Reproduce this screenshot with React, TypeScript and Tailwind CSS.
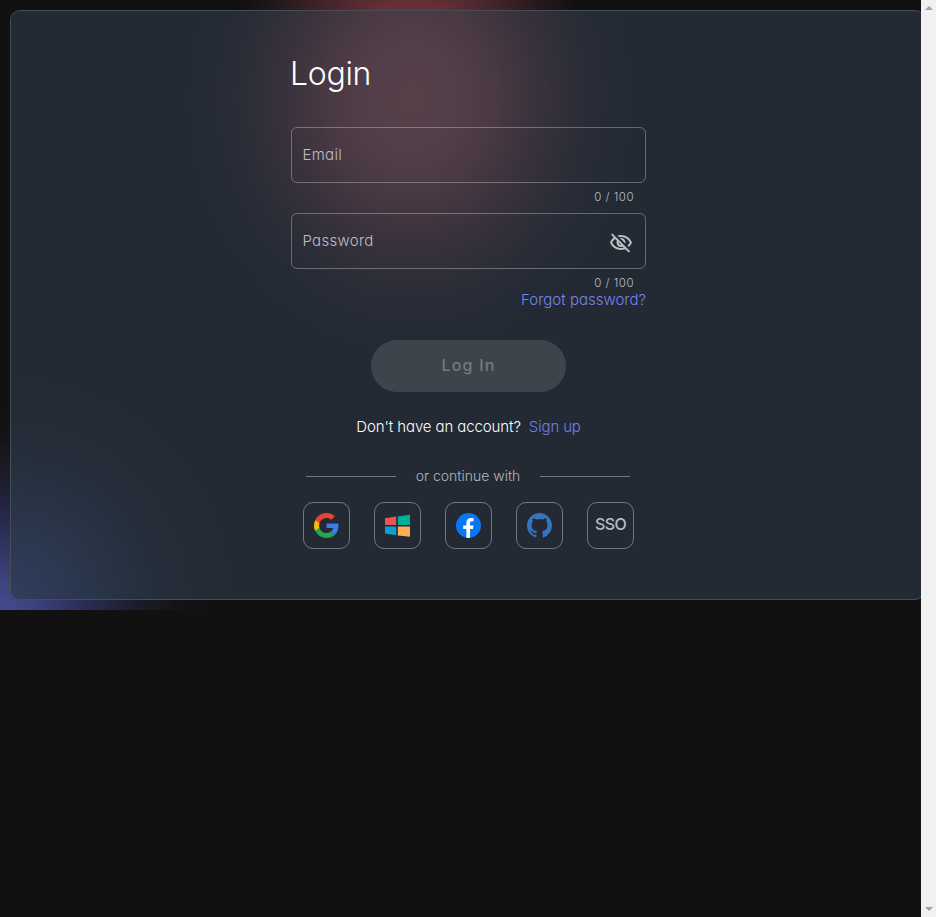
import React from "react";

function Field({ label, children }: { label: string; children?: React.ReactNode }) {
  return (
    <div className="h-[86px]">
      <div className="flex h-14 items-center justify-between rounded-[6px] border border-white/30 pr-3 pl-[10.5px]">
        <span className="text-[15px] leading-5 font-[350] tracking-[0.28px] text-[#bebfc4]">{label}</span>
        {children}
      </div>
      <div className="pt-[6px] pr-3 text-right text-[11.5px] leading-4 font-[350] tracking-[0.5px] text-[#bbbec3]">0 / 100</div>
    </div>
  );
}

function EyeOff() {
  return (
    <svg viewBox="0 0 24 24" className="mt-[3px] h-6 w-6" fill="#bcc0c5">
      <path d="M12 6c3.79 0 7.17 2.13 8.82 5.5-.59 1.22-1.42 2.27-2.41 3.12l1.41 1.41c1.39-1.23 2.49-2.77 3.18-4.53C21.27 7.11 17 4 12 4c-1.27 0-2.49.2-3.64.57l1.65 1.65C10.66 6.09 11.32 6 12 6zm-1.07 1.14L13 9.21c.57.25 1.03.71 1.28 1.28l2.07 2.07c.08-.34.14-.7.14-1.07C16.5 9.01 14.48 7 12 7c-.37 0-.72.05-1.07.14zM2.01 3.87l2.68 2.68C3.06 7.83 1.77 9.53 1 11.5 2.73 15.89 7 19 12 19c1.52 0 2.98-.29 4.32-.82l3.42 3.42 1.41-1.41L3.42 2.45 2.01 3.87zm7.5 7.5l2.61 2.61c-.04.01-.08.02-.12.02-1.38 0-2.5-1.12-2.5-2.5 0-.05.01-.08.01-.13zm-3.4-3.4l1.75 1.75c-.23.55-.36 1.15-.36 1.78 0 2.48 2.02 4.5 4.5 4.5.63 0 1.23-.13 1.77-.36l.98.98c-.88.24-1.8.38-2.75.38-3.79 0-7.17-2.13-8.82-5.5.7-1.43 1.72-2.61 2.93-3.53z" />
    </svg>
  );
}

function Google() {
  return (
    <svg viewBox="0 0 48 48" className="h-[25px] w-[25px]">
      <path fill="#EA4335" d="M24 9.5c3.54 0 6.71 1.22 9.21 3.6l6.85-6.85C35.9 2.38 30.47 0 24 0 14.62 0 6.51 5.38 2.56 13.22l7.98 6.19C12.43 13.72 17.74 9.5 24 9.5z" />
      <path fill="#3b7bea" d="M46.98 24.55c0-1.57-.15-3.09-.38-4.55H24v9.02h12.94c-.58 2.96-2.26 5.48-4.78 7.18l7.73 6c4.51-4.18 7.09-10.36 7.09-17.65z" />
      <path fill="#FBBC05" d="M10.53 28.59c-.48-1.45-.76-2.99-.76-4.59s.27-3.14.76-4.59l-7.98-6.19C.92 16.46 0 20.12 0 24c0 3.88.92 7.54 2.56 10.78l7.97-6.19z" />
      <path fill="#22a652" d="M24 48c6.48 0 11.93-2.13 15.89-5.81l-7.73-6c-2.15 1.45-4.92 2.3-8.16 2.3-6.26 0-11.57-4.22-13.47-9.91l-7.98 6.19C6.51 42.62 14.62 48 24 48z" />
    </svg>
  );
}

function Windows() {
  return (
    <svg viewBox="0 0 25 24" className="h-6 w-[25px]">
      <path fill="#e9554f" d="M0 4.2 11.2 2.6V11H0z" />
      <path fill="#00b09c" d="M12.8 2.4 25 .8V11H12.8z" />
      <path fill="#0aa0d0" d="M0 12.6h11.2v8.6L0 19.6z" />
      <path fill="#f9ad55" d="M12.8 12.6H25v10.2l-12.2-1.4z" />
    </svg>
  );
}

function Facebook() {
  return (
    <svg viewBox="0 0 26 26" className="h-[25px] w-[25px]">
      <circle cx="13" cy="13" r="13" fill="#0877f2" />
      <path fill="#fff" d="M10.8 25.8v-9.1H7.5V13h3.3v-2.8c0-3.2 1.9-4.9 4.8-4.9 1.1 0 2 .1 2.7.2v3.2h-1.7c-1.5 0-2 .8-2 2V13h3.6l-.6 3.7h-3v9.1c-1.3.2-2.6.2-3.8 0z" />
    </svg>
  );
}

function Github() {
  return (
    <svg viewBox="0.5 0.5 23 23" className="h-[25px] w-[25px]" fill="#3474c0">
      <path d="M12 .5C5.65.5.5 5.65.5 12c0 5.08 3.29 9.39 7.86 10.91.58.11.79-.25.79-.55v-2.1c-3.2.7-3.87-1.37-3.87-1.37-.52-1.33-1.28-1.68-1.28-1.68-1.04-.71.08-.7.08-.7 1.16.08 1.76 1.19 1.76 1.19 1.03 1.76 2.7 1.25 3.35.96.1-.75.4-1.25.73-1.54-2.55-.29-5.24-1.28-5.24-5.68 0-1.26.45-2.28 1.19-3.09-.12-.29-.52-1.46.11-3.04 0 0 .97-.31 3.16 1.18a10.9 10.9 0 0 1 5.76 0c2.2-1.49 3.16-1.18 3.16-1.18.63 1.58.23 2.75.11 3.04.74.81 1.19 1.83 1.19 3.09 0 4.41-2.69 5.38-5.25 5.67.41.36.78 1.05.78 2.13v3.16c0 .31.21.67.8.55A11.5 11.5 0 0 0 23.5 12C23.5 5.65 18.35.5 12 .5z" />
    </svg>
  );
}

function Tile({ children }: { children: React.ReactNode }) {
  return (
    <div className="flex h-[47px] w-[47px] items-center justify-center rounded-[10px] border border-[#737980]">{children}</div>
  );
}

export default function App() {
  return (
    <div className="flex h-[917px] w-[936px] overflow-hidden bg-[#111] font-['Inter','Liberation_Sans',sans-serif] [font-feature-settings:'cv11']">
      <div className="h-full w-[921px] overflow-hidden">
        <div className="h-[610px] w-[921px] overflow-hidden bg-[radial-gradient(ellipse_175px_170px_at_410px_60px,#70343a_0%,#643036_34%,#42252a_58%,#26191c_80%,#11111100_100%),radial-gradient(circle_205px_at_0px_615px,#454b90_0%,#3e4480_15%,#292d54_42%,#1c1d2c_66%,#141418_85%,#111111_100%)] p-[10px]">
          <div className="h-[590px] w-[915px] rounded-[10px] border border-[#454d55] bg-[#232a34] bg-[radial-gradient(ellipse_220px_255px_at_400px_86px,#56404a_0%,#533f49_18%,#493944_38%,#3a323c_56%,#2d2e38_73%,#262b35_88%,#232a3400_100%),radial-gradient(circle_220px_at_0px_588px,#303d5c_0%,#2d3953_22%,#283345_45%,#252d3a_68%,#232c36_85%,#232a34_100%)] pt-[42px] pl-[280px]">
            <div className="w-[355px]">
              <h1 className="-ml-[1px] h-[74px] text-[32px] leading-[42px] font-light tracking-[-0.3px] text-white">Login</h1>
              <Field label="Email" />
              <Field label="Password">
                <EyeOff />
              </Field>
              <div className="-mt-[9px] text-right text-[15px] leading-5 font-[350] tracking-[0px] text-[#7884ea]">Forgot password?</div>
              <button className="mx-auto mt-[30px] flex h-[52px] w-[195px] items-center justify-center rounded-full bg-[#3d444c] pb-[2px] text-[16px] font-medium tracking-[1.2px] text-[#747a81]">
                Log In
              </button>
              <div className="mt-[25px] flex justify-center gap-2 text-[15px] leading-5 font-[350] whitespace-nowrap">
                <span className="tracking-[-0.1px] text-white">Don't have an account?</span>
                <span className="tracking-[-0.15px] text-[#7280ea]">Sign up</span>
              </div>
              <div className="mt-[29px] flex h-5 items-center justify-between pr-4 pl-[15px] text-[14px] font-[350] text-[#b2b7bd]">
                <span className="h-px w-[90px] bg-[#737980]" />
                <span className="-mt-px">or continue with</span>
                <span className="h-px w-[90px] bg-[#737980]" />
              </div>
              <div className="mt-[16px] flex justify-between px-[12px]">
                <Tile><Google /></Tile>
                <Tile><Windows /></Tile>
                <Tile><Facebook /></Tile>
                <Tile><Github /></Tile>
                <Tile><span className="-mt-[3px] text-[16px] font-medium tracking-[-0.6px] text-[#b8bcc1]">SSO</span></Tile>
              </div>
            </div>
          </div>
        </div>
      </div>
      <div className="z-10 flex w-[15px] shrink-0 flex-col items-center justify-between bg-[#f1f1f1] py-[6px]">
        <span className="h-0 w-0 border-x-[4px] border-b-[4px] border-x-transparent border-b-[#a3a3a3]" />
        <span className="h-0 w-0 border-x-[4px] border-t-[4px] border-x-transparent border-t-[#a3a3a3]" />
      </div>
    </div>
  );
}
